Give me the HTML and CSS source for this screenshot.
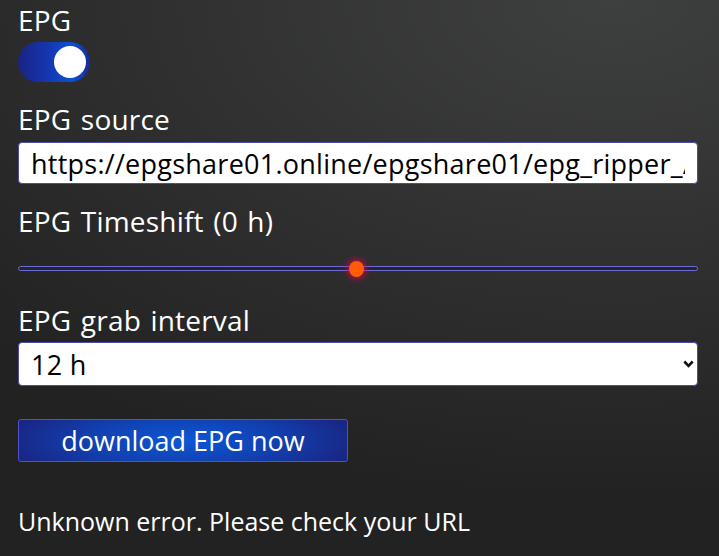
FILE: index.html
```html
<!DOCTYPE html>
<html lang="en">
<head>
    <meta charset="UTF-8">
    <meta name="viewport" content="width=device-width, initial-scale=1.0">
    <title>EPG settings</title>
    <link rel="stylesheet" href="styles.css">
</head>
<body>
    <div class="settings">
        <label class="field-label">EPG</label>
        <label class="switch">
            <input type="checkbox" checked>
            <span class="switch-track"><span class="switch-knob"></span></span>
        </label>

        <label class="field-label gap-top" for="epg-source">EPG source</label>
        <input type="text" id="epg-source" class="text-input" value="https://epgshare01.online/epgshare01/epg_ripper_ALL_SOURCES1.xml.gz">

        <label class="field-label gap-top" for="epg-shift">EPG Timeshift (0 h)</label>
        <div class="range">
            <div class="range-track"></div>
            <div class="range-thumb"></div>
        </div>

        <label class="field-label gap-top-lg" for="epg-interval">EPG grab interval</label>
        <div class="select-wrap">
            <select id="epg-interval" class="select-input">
                <option>6 h</option>
                <option selected>12 h</option>
                <option>24 h</option>
            </select>
            <svg class="chevron" width="11" height="8" viewBox="0 0 11 8"><path d="M1.3 1.5 L5.5 5.8 L9.7 1.5" fill="none" stroke="#111" stroke-width="2.6"/></svg>
        </div>

        <button class="grab-btn">download EPG now</button>

        <div class="status">Unknown error. Please check your URL</div>
    </div>
</body>
</html>
```

FILE: styles.css
```css
html, body {
    height: 100%;
}
body {
    margin: 0;
    font-family: "Open Sans", "Noto Sans", sans-serif;
    color: #fff;
    background: radial-gradient(ellipse 120% 90% at 85% 0%, #3e403f 0%, #2f2f2f 55%, #222 100%);
    overflow: hidden;
}
.settings {
    display: flex;
    flex-direction: column;
    align-items: flex-start;
    padding: 4px 21px 0 18px;
}
.field-label {
    display: block;
    font-size: 28px;
    line-height: 32px;
    letter-spacing: 0.2px;
    word-spacing: 2px;
}
.gap-top {
    margin-top: 21px;
}
.gap-top-lg {
    margin-top: 27px;
}

/* toggle */
.switch {
    margin-top: 6px;
    display: block;
}
.switch input {
    display: none;
}
.switch-track {
    display: flex;
    align-items: center;
    justify-content: flex-end;
    width: 72px;
    height: 40px;
    padding: 0 4px;
    box-sizing: border-box;
    border-radius: 20px;
    background: linear-gradient(90deg, #1b2282 0%, #1538b4 45%, #0b52d6 75%, #1a2a90 100%);
}
.switch-knob {
    width: 32px;
    height: 32px;
    border-radius: 50%;
    background: #fff;
}

/* text input */
.text-input, .select-input {
    width: 100%;
    box-sizing: border-box;
    margin-top: 7px;
    height: 42px;
    padding: 0 12px;
    border: 1px solid #4b4ba8;
    border-radius: 4px;
    background: #fff;
    color: #000;
    font-family: inherit;
    font-size: 27px;
    letter-spacing: 0.25px;
    outline: none;
}

/* slider */
.range {
    position: relative;
    width: 100%;
    height: 40px;
}
.range-track {
    position: absolute;
    left: 0;
    right: 0;
    top: 29px;
    height: 5px;
    box-sizing: border-box;
    border: 1px solid #6c6cd6;
    border-radius: 3px;
    background: #23232e;
}
.range-thumb {
    position: absolute;
    left: 331px;
    top: 24px;
    width: 15px;
    height: 16px;
    border-radius: 50%;
    background: #ff5a06;
    box-shadow: 0 0 6px 2px rgba(230, 0, 80, 0.75);
}

/* select */
.select-wrap {
    position: relative;
    width: 100%;
    margin-top: 6px;
}
.select-input {
    margin-top: 0;
    height: 44px;
    appearance: none;
    -webkit-appearance: none;
}
.chevron {
    position: absolute;
    right: 4px;
    top: 18px;
    pointer-events: none;
}

/* button */
.grab-btn {
    margin-top: 33px;
    width: 330px;
    height: 43px;
    border: 1px solid #5252c8;
    border-radius: 3px;
    background: radial-gradient(ellipse 60% 120% at 50% 50%, #0b58d8 0%, #123fae 50%, #1b1f78 100%);
    color: #fff;
    font-family: inherit;
    font-size: 27px;
    cursor: pointer;
}

.status {
    margin-top: 43px;
    font-size: 25px;
    line-height: 32px;
}
```
